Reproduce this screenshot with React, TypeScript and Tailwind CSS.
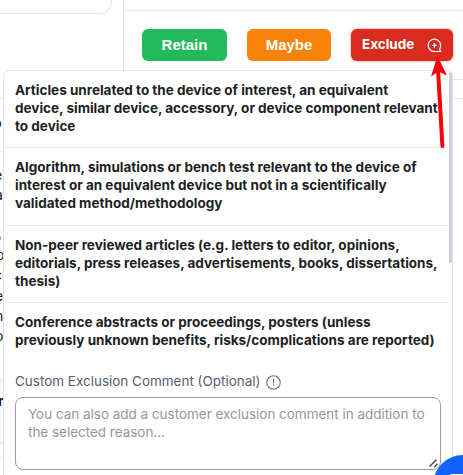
const reasons: { lines: string[]; height: string }[] = [
  {
    lines: [
      'Articles unrelated to the device of interest, an equivalent',
      'device, similar device, accessory, or device component relevant',
      'to device',
    ],
    height: 'h-[77px] border-b',
  },
  {
    lines: [
      'Algorithm, simulations or bench test relevant to the device of',
      'interest or an equivalent device but not in a scientifically',
      'validated method/methodology',
    ],
    height: 'h-[78px] border-b',
  },
  {
    lines: [
      'Non-peer reviewed articles (e.g. letters to editor, opinions,',
      'editorials, press releases, advertisements, books, dissertations,',
      'thesis)',
    ],
    height: 'h-[77px] border-b',
  },
  {
    lines: [
      'Conference abstracts or proceedings, posters (unless',
      'previously unknown benefits, risks/complications are reported)',
    ],
    height: 'h-[59px]',
  },
];

function ArticleColumn() {
  return (
    <div className="flex w-[123px] shrink-0 flex-col text-[14px] leading-5 text-[#16181d]">
      <div className="h-[14px] w-[112px] rounded-br-[12px] border-r border-b border-[#e4e6ea]" />
      <div className="h-[84px]" />
      <div className="flex h-[54px] items-center border-y border-[#e8eaef]">
        <span className="-ml-[7px] -mt-[5px] font-bold">o</span>
      </div>
      <div className="flex h-[227px] flex-col pt-[13px]">
        <span className="-ml-[6px] h-5">e</span>
        <span className="-ml-[5px] h-[38px]">a</span>
        <span className="-ml-[2px] h-[22px] text-[#2c83c4]">,</span>
        <span className="-ml-[4px] h-5">o</span>
        <span className="-ml-[6px] h-[21px]">cl</span>
        <span className="-ml-[5px] h-5">e</span>
        <span className="-ml-[5px] h-5">n</span>
        <span className="-ml-[5px] h-5">o</span>
      </div>
      <div className="h-[65px] border-y border-[#e8eaef] bg-[#f9f9fc] pt-[11px]">
        <span className="-ml-[2px] font-bold">r</span>
      </div>
      <div className="h-[14px] border-b border-[#e8eaef]" />
    </div>
  );
}

function CommentIcon() {
  return (
    <svg width="15" height="15" viewBox="0 0 15 15" fill="none" stroke="#fff" strokeWidth="1.2" strokeLinecap="round" strokeLinejoin="round">
      <path d="M13.8 13.5H7.5A6.2 6.2 0 1 1 13.6 7.3C13.6 9 13 10.3 12.6 11.2L13.8 13.5Z" />
      <path d="M7.4 5.4v3.8M5.5 7.3h3.8" />
    </svg>
  );
}

function ActionPanel() {
  return (
    <div className="flex flex-1 flex-col border-l border-[#e4e6ea]">
      <div className="h-[11px] border-b border-[#e8e9ec]" />
      <div className="flex h-[69px] shrink-0 items-start border-b border-[#e5e8ee] pt-[18px] pl-[18px] font-['Liberation_Sans',sans-serif] text-[15px] font-bold text-white">
        <button className="h-8 w-[85px] rounded-[6px] bg-[#22bb5c]">Retain</button>
        <button className="ml-5 h-8 w-[84px] rounded-[6px] bg-[#f9820b]">Maybe</button>
        <button className="ml-5 flex h-8 w-[102px] items-center justify-between rounded-[6px] bg-[#d92b20] pr-[11px] pl-[11px] font-['Inter',sans-serif] text-[13.5px] font-bold shadow-[0_0_0_1px_#fbd3cf,0_0_3px_1px_#fbd3cf]">
          <span className="-mt-px">Exclude</span>
          <CommentIcon />
        </button>
      </div>
      <div className="h-[19px] border-b border-[#e5e8ee]" />
    </div>
  );
}

function ExclusionMenu() {
  return (
    <div className="absolute top-[70px] left-[3px] flex h-[420px] w-[450px] flex-col rounded-t-[6px] border border-[#e4e6eb] bg-white">
      {reasons.map((reason) => (
        <div
          key={reason.lines[0]}
          className={`${reason.height} mr-[4px] shrink-0 border-[#e8eaed] pt-[10px] pl-[11px] text-[13.53px] leading-[18px] font-bold whitespace-nowrap text-[#1c1f24]`}
        >
          {reason.lines.map((line) => (
            <div key={line}>{line}</div>
          ))}
        </div>
      ))}
      <div className="flex items-center pt-[10px] pl-[11px] text-[13.48px] leading-[18px] text-[#556070]">
        Custom Exclusion Comment (Optional)
        <svg className="mt-[3px] ml-[5px]" width="15" height="15" viewBox="0 0 15 15" fill="none" stroke="#6d7480" strokeWidth="1.1">
          <circle cx="7.5" cy="7.5" r="6.7" />
          <path d="M7.5 3.8v4.6M7.5 9.8v1.3" />
        </svg>
      </div>
      <div className="relative mt-[7px] ml-[11px] h-[73px] w-[426px] shrink-0 rounded-[8px] border border-[#9799b0] pt-[7px] pl-[12px] text-[13.46px] leading-[18px] whitespace-nowrap text-[#9297a3]">
        You can also add a customer exclusion comment in addition to
        <br />
        the selected reason...
        <svg className="absolute right-[1px] bottom-[1px]" width="10" height="9" viewBox="0 0 10 9" stroke="#44463f" strokeWidth="1.4">
          <path d="M.5 7.6L7.4.7M5.2 8.2L8.4 5" />
        </svg>
      </div>
      <div className="absolute top-[1px] right-0 h-[191px] w-[3px] rounded-t-full bg-[#cdcfe0]" />
    </div>
  );
}

export default function App() {
  return (
    <div className="relative h-[475px] w-[463px] overflow-hidden bg-white font-['Inter',sans-serif]">
      <div className="flex h-full">
        <ArticleColumn />
        <ActionPanel />
      </div>
      <ExclusionMenu />
      <div className="absolute top-[455px] left-[433px] size-[60px] rounded-full bg-[#0f62fe]">
        <div className="mt-[19px] ml-[17px] h-[20px] w-[26px] rounded-[2px] bg-white" />
      </div>
      <svg className="absolute top-[54px] left-[426px]" width="24" height="98" viewBox="0 0 24 98">
        <path d="M12 15L16.4 92" stroke="#fa0009" strokeWidth="4" strokeLinecap="round" />
        <path d="M11.5 2L21 21.5L12.5 17.5L5 22.5Z" fill="#fa0009" />
      </svg>
    </div>
  );
}
